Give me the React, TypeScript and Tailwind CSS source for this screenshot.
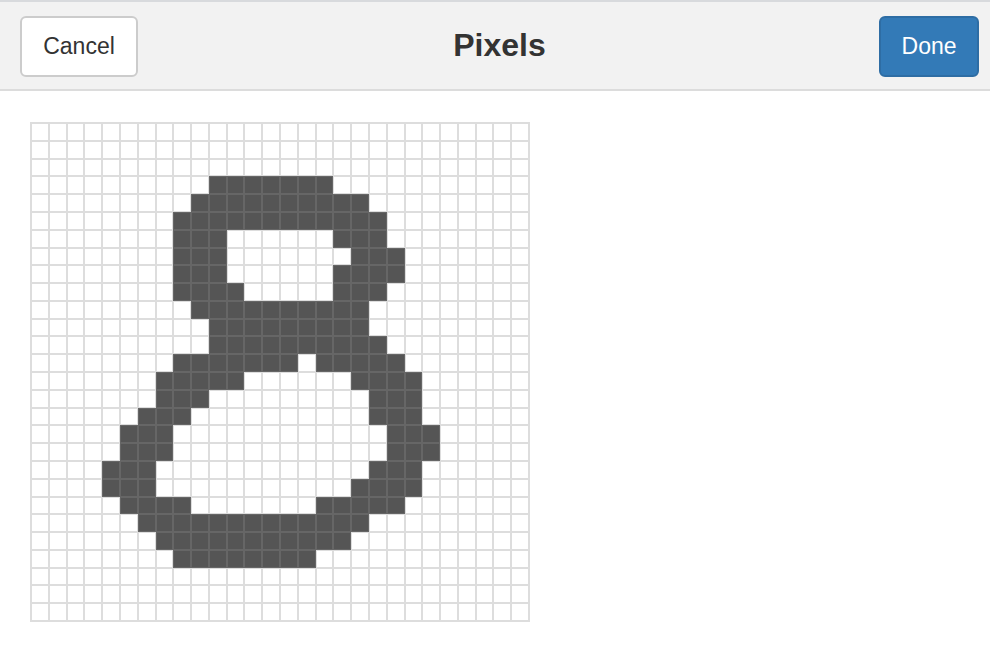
import React from 'react';

// filled spans per row: [from, to] inclusive column ranges
const spans: Record<number, [number, number][]> = {
  3: [[10, 16]],
  4: [[9, 18]],
  5: [[8, 19]],
  6: [[8, 10], [17, 19]],
  7: [[8, 10], [18, 20]],
  8: [[8, 10], [17, 20]],
  9: [[8, 11], [17, 19]],
  10: [[9, 18]],
  11: [[10, 18]],
  12: [[10, 19]],
  13: [[8, 14], [16, 20]],
  14: [[7, 11], [18, 21]],
  15: [[7, 9], [19, 21]],
  16: [[6, 8], [19, 21]],
  17: [[5, 7], [20, 22]],
  18: [[5, 7], [20, 22]],
  19: [[4, 6], [19, 21]],
  20: [[4, 6], [18, 21]],
  21: [[5, 8], [16, 20]],
  22: [[6, 18]],
  23: [[7, 17]],
  24: [[8, 15]],
};

const SIZE = 28;

function isOn(r: number, c: number) {
  const row = spans[r];
  if (!row) return false;
  return row.some(([a, b]) => c >= a && c <= b);
}

function PixelGrid() {
  const cells = [];
  for (let r = 0; r < SIZE; r++) {
    for (let c = 0; c < SIZE; c++) {
      const on = isOn(r, c);
      cells.push(
        <div
          key={`${r}-${c}`}
          className={on ? 'bg-[#555555] border border-[#666666]' : 'bg-white border border-[#dddddd]'}
        />
      );
    }
  }
  return (
    <div className="w-[500px] h-[500px] border border-[#dddddd] grid grid-cols-[repeat(28,1fr)] grid-rows-[repeat(28,1fr)]">
      {cells}
    </div>
  );
}

export default function App() {
  return (
    <div className="min-h-[652px] bg-white" style={{ fontFamily: '"Liberation Sans", Arial, sans-serif' }}>
      <header className="h-[91px] bg-[#f2f2f2] border-t-2 border-t-[#d8dadd] border-b-2 border-b-[#dcdcdc] flex items-start pl-[20px] pr-[11px] pt-[14px]">
        <div className="flex-1 flex">
          <button className="w-[118px] h-[61px] bg-white border-2 border-[#cccccc] rounded-[6px] text-[23px] text-[#333333]">
            Cancel
          </button>
        </div>
        <h1 className="text-[32px] font-bold text-[#333333] leading-none mt-[13px]">Pixels</h1>
        <div className="flex-1 flex justify-end">
          <button className="w-[100px] h-[61px] bg-[#337ab7] border-2 border-[#2e6da4] rounded-[6px] text-[23px] text-white">
            Done
          </button>
        </div>
      </header>
      <main className="pl-[30px] pt-[31px]">
        <PixelGrid />
      </main>
    </div>
  );
}
